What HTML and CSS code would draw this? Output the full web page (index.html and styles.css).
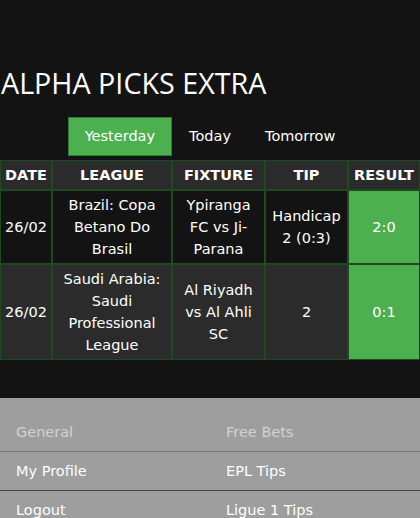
FILE: index.html
```html
<!DOCTYPE html>
<html lang="en">
<head>
<meta charset="utf-8">
<title>Alpha Picks Extra</title>
<link rel="stylesheet" href="styles.css">
</head>
<body>
<main class="page">
  <h1 class="title">ALPHA PICKS EXTRA</h1>
  <nav class="tabs">
    <a class="tab active">Yesterday</a>
    <a class="tab">Today</a>
    <a class="tab">Tomorrow</a>
  </nav>
  <table class="picks">
    <colgroup>
      <col class="c-date"><col class="c-league"><col class="c-fixture"><col class="c-tip"><col class="c-result">
    </colgroup>
    <thead>
      <tr><th>DATE</th><th>LEAGUE</th><th>FIXTURE</th><th>TIP</th><th>RESULT</th></tr>
    </thead>
    <tbody>
      <tr class="odd">
        <td class="date">26/02</td>
        <td>Brazil: Copa Betano Do Brasil</td>
        <td>Ypiranga FC vs Ji-Parana</td>
        <td>Handicap 2 (0:3)</td>
        <td class="win">2:0</td>
      </tr>
      <tr class="even">
        <td class="date">26/02</td>
        <td>Saudi Arabia: Saudi Professional League</td>
        <td>Al Riyadh vs Al Ahli SC</td>
        <td>2</td>
        <td class="win">0:1</td>
      </tr>
    </tbody>
  </table>
</main>
<footer class="footer">
  <ul class="menu">
    <li class="menu-head">General</li>
    <li class="menu-item">My Profile</li>
    <li class="menu-item">Logout</li>
  </ul>
  <ul class="menu">
    <li class="menu-head">Free Bets</li>
    <li class="menu-item">EPL Tips</li>
    <li class="menu-item">Ligue 1 Tips</li>
  </ul>
</footer>
</body>
</html>
```
FILE: styles.css
```css
html, body {
  margin: 0;
  padding: 0;
  background: #131313;
  color: #fff;
  font-family: "DejaVu Sans", Verdana, sans-serif;
}
.page {
  padding-top: 63px;
  padding-bottom: 38px;
}
.title {
  margin: 0;
  padding-left: 1px;
  font-family: "Open Sans", "DejaVu Sans", sans-serif;
  font-weight: 400;
  font-size: 28.7px;
  line-height: 40px;
  color: #fff;
}
.tabs {
  display: flex;
  justify-content: center;
  margin-top: 14px;
}
.tab {
  display: block;
  padding: 8px 16px;
  border: 1px solid transparent;
  font-size: 14.5px;
  line-height: 21px;
  color: #fff;
}
.tab.active {
  background: #4caf50;
  border-color: #2f7d33;
}
.picks {
  margin-top: 4px;
  width: 420px;
  table-layout: fixed;
  border-collapse: separate;
  border-spacing: 0;
}
.c-date { width: 52px; }
.c-league { width: 120px; }
.c-fixture { width: 93px; }
.c-tip { width: 83px; }
.c-result { width: 72px; }
.picks th, .picks td {
  border: 1px solid #1f4a1f;
  padding: 3px 5px;
  text-align: center;
  vertical-align: middle;
  line-height: 22px;
  font-size: 14.5px;
  color: #fff;
}
.picks th {
  background: #2b2b2b;
  padding: 3px 2px;
  font-weight: 700;
}
.picks td.date {
  padding-left: 2px;
  padding-right: 2px;
}
.odd td { background: #131313; }
.even td { background: #2b2b2b; }
.picks td.win { background: #4caf50; }
.footer {
  display: flex;
  background: #9e9e9e;
  padding-top: 15px;
}
.menu {
  flex: 1;
  margin: 0;
  padding: 0;
  list-style: none;
}
.menu li {
  padding-left: 16px;
  line-height: 38px;
  font-size: 14.5px;
}
.menu-head {
  color: #d2d2d2;
  border-bottom: 1px solid #757575;
}
.menu-item {
  color: #fff;
  border-bottom: 1px solid #444;
}
```
